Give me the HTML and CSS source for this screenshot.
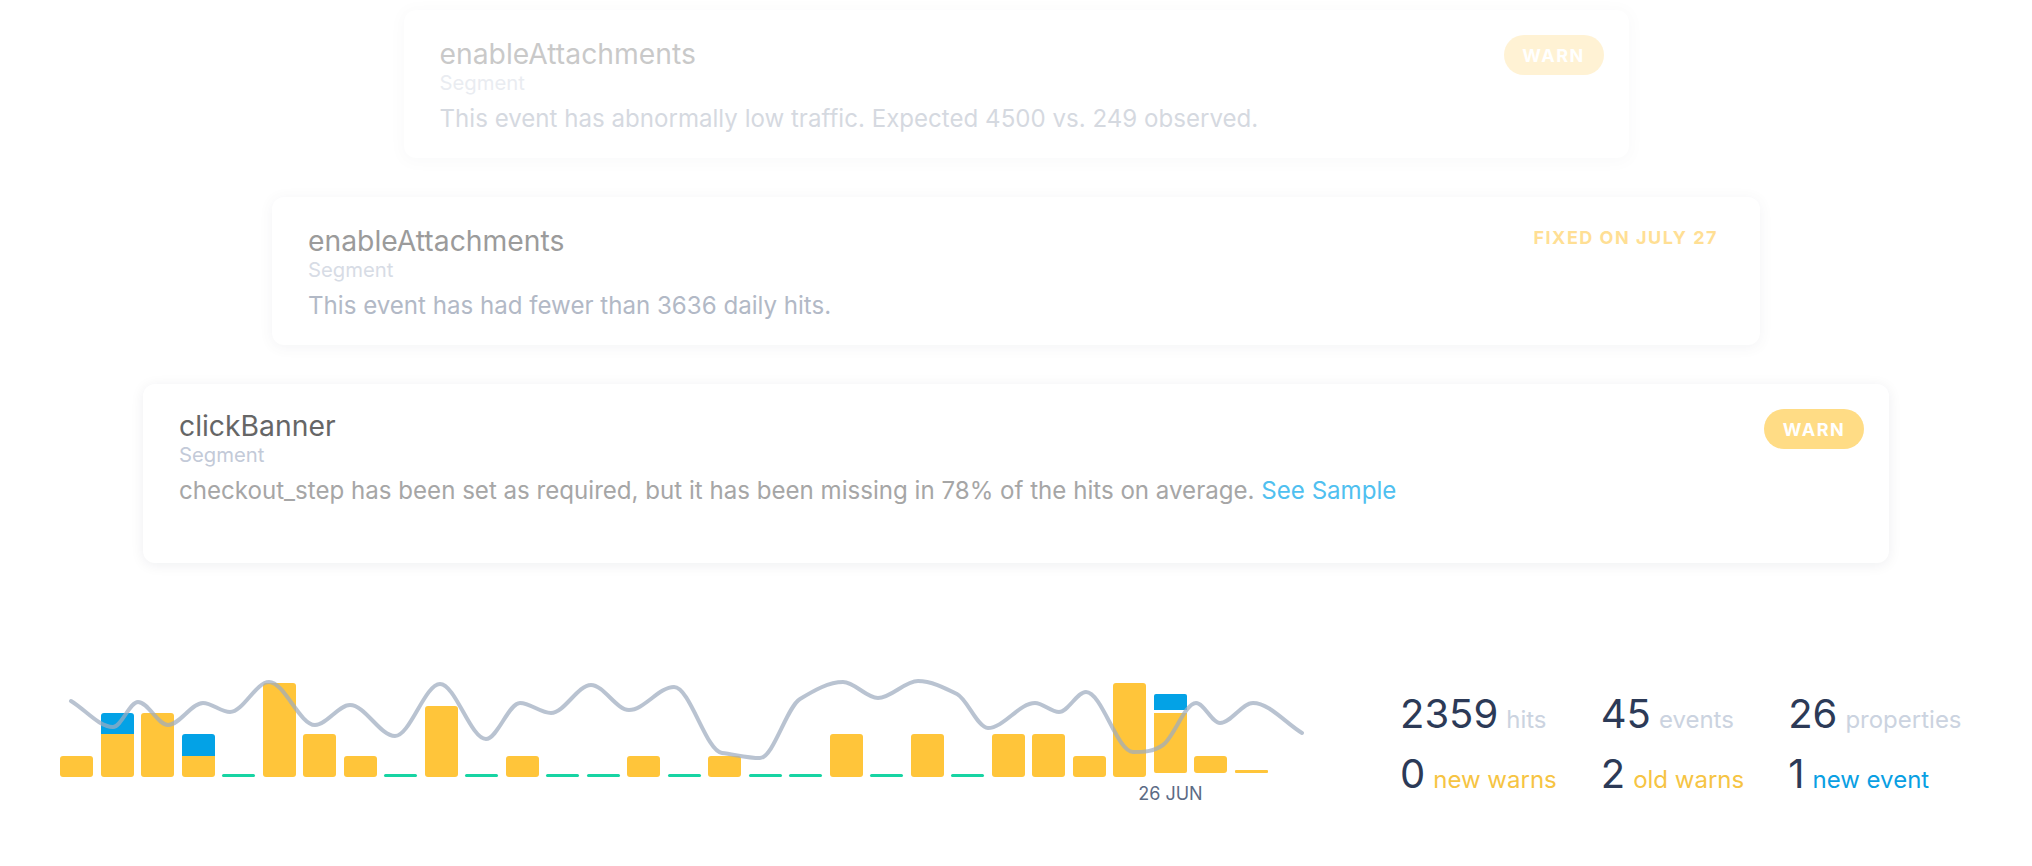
FILE: index.html
```html
<!DOCTYPE html>
<html lang="en">
<head>
<meta charset="utf-8">
<title>Event monitor</title>
<link rel="stylesheet" href="styles.css">
</head>
<body>
<div class="page">
  <section class="alerts">
    <article class="card card--far">
      <div class="card-body card-body--shifted">
        <div class="card-title">enableAttachments</div>
        <div class="card-source">Segment</div>
        <p class="card-text card-text--slate">This event has abnormally low traffic. Expected 4500 vs. 249 observed.</p>
      </div>
      <span class="badge badge--warn">WARN</span>
    </article>
    <article class="card card--mid">
      <div class="card-body card-body--shifted">
        <div class="card-title">enableAttachments</div>
        <div class="card-source">Segment</div>
        <p class="card-text card-text--slate">This event has had fewer than 3636 daily hits.</p>
      </div>
      <span class="badge badge--fixed">FIXED ON JULY 27</span>
    </article>
    <article class="card card--near">
      <div class="card-body">
        <div class="card-title">clickBanner</div>
        <div class="card-source">Segment</div>
        <p class="card-text">checkout_step has been set as required, but it has been missing in 78% of the hits on average. <a class="link">See Sample</a></p>
      </div>
      <span class="badge badge--warn">WARN</span>
    </article>
  </section>

  <section class="summary">
    <div class="chart">
      <div class="bars">
        <div class="col"><div class="plot"><div class="bar" style="height:21px"></div></div></div>
        <div class="col"><div class="plot"><div class="bar bar--stack"><div class="seg seg--new" style="height:21px"></div><div class="seg" style="height:43px"></div></div></div></div>
        <div class="col"><div class="plot"><div class="bar" style="height:64px"></div></div></div>
        <div class="col"><div class="plot"><div class="bar bar--stack"><div class="seg seg--new" style="height:22px"></div><div class="seg" style="height:21px"></div></div></div></div>
        <div class="col"><div class="plot"><div class="dash"></div></div></div>
        <div class="col"><div class="plot"><div class="bar" style="height:94px"></div></div></div>
        <div class="col"><div class="plot"><div class="bar" style="height:43px"></div></div></div>
        <div class="col"><div class="plot"><div class="bar" style="height:21px"></div></div></div>
        <div class="col"><div class="plot"><div class="dash"></div></div></div>
        <div class="col"><div class="plot"><div class="bar" style="height:71px"></div></div></div>
        <div class="col"><div class="plot"><div class="dash"></div></div></div>
        <div class="col"><div class="plot"><div class="bar" style="height:21px"></div></div></div>
        <div class="col"><div class="plot"><div class="dash"></div></div></div>
        <div class="col"><div class="plot"><div class="dash"></div></div></div>
        <div class="col"><div class="plot"><div class="bar" style="height:21px"></div></div></div>
        <div class="col"><div class="plot"><div class="dash"></div></div></div>
        <div class="col"><div class="plot"><div class="bar" style="height:21px"></div></div></div>
        <div class="col"><div class="plot"><div class="dash"></div></div></div>
        <div class="col"><div class="plot"><div class="dash"></div></div></div>
        <div class="col"><div class="plot"><div class="bar" style="height:43px"></div></div></div>
        <div class="col"><div class="plot"><div class="dash"></div></div></div>
        <div class="col"><div class="plot"><div class="bar" style="height:43px"></div></div></div>
        <div class="col"><div class="plot"><div class="dash"></div></div></div>
        <div class="col"><div class="plot"><div class="bar" style="height:43px"></div></div></div>
        <div class="col"><div class="plot"><div class="bar" style="height:43px"></div></div></div>
        <div class="col"><div class="plot"><div class="bar" style="height:21px"></div></div></div>
        <div class="col"><div class="plot"><div class="bar" style="height:94px"></div></div></div>
        <div class="col"><div class="plot plot--today"><div class="bar bar--split"><div class="seg seg--new" style="height:16px"></div><div class="seg" style="height:60px"></div></div></div><div class="axis-label">26 JUN</div></div>
        <div class="col"><div class="plot plot--today"><div class="bar" style="height:17px"></div></div></div>
        <div class="col"><div class="plot plot--today"><div class="bar bar--thin"></div></div></div>
      </div>
      <svg class="trend" width="1260" height="110" viewBox="60 670 1260 110" aria-hidden="true">
        <path d="M71 701 C85 709.4 99 727 113 727 C121.3 727 129.7 702 138 702 C148 702 158 725 168 725 C179.7 725 191.3 703 203 703 C212 703 221 712 230 712 C243 712 256 682 269 682 C284.3 682 299.7 725 315 725 C326.7 725 338.3 705 350 705 C365 705 380 736 395 736 C410 736 425 684 440 684 C455.3 684 470.7 739 486 739 C497.3 739 508.7 703 520 703 C530.3 703 540.7 713 551 713 C564.3 713 577.7 685 591 685 C603.7 685 616.3 710 629 710 C644 710 659 687 674 687 C690 687 706 751.1 722 753 C734.7 754.5 747.3 758 760 758 C773.3 758 786.7 707 800 699 C814.3 690.4 828.7 682 843 682 C854.7 682 866.3 698 878 698 C891.3 698 904.7 681 918 681 C931 681 944 687.5 957 694 C967.3 699.2 977.7 728 988 728 C1003.7 728 1019.3 703 1035 703 C1043 703 1051 712 1059 712 C1068 712 1077 692 1086 692 C1101.7 692 1117.3 752 1133 752 C1143 752 1153 752 1163 745 C1174 737.3 1185 703 1196 703 C1204 703 1212 723 1220 723 C1231 723 1242 703 1253 703 C1269.3 703 1285.7 723.2 1302 733"/>
      </svg>
    </div>

    <div class="stats">
      <div class="stat">2359<span class="stat-label stat-label--muted">hits</span></div>
      <div class="stat">45<span class="stat-label stat-label--muted">events</span></div>
      <div class="stat">26<span class="stat-label stat-label--muted">properties</span></div>
      <div class="stat">0<span class="stat-label stat-label--warn">new warns</span></div>
      <div class="stat">2<span class="stat-label stat-label--warn">old warns</span></div>
      <div class="stat">1<span class="stat-label stat-label--new">new event</span></div>
    </div>
  </section>
</div>
</body>
</html>
```

FILE: styles.css
```css
* { box-sizing: border-box; }

body {
  margin: 0;
  background: #ffffff;
  font-family: "Inter", "Noto Sans", sans-serif;
}

.page {
  padding-top: 10px;
}

/* ---------- alert cards ---------- */
.alerts {
  display: flex;
  flex-direction: column;
  align-items: center;
  gap: 39px;
}

.card {
  display: flex;
  align-items: flex-start;
  background: #ffffff;
  border-radius: 12px;
  box-shadow: 0 2px 14px rgba(20, 30, 50, 0.07);
  padding: 25px 25px 25px 36px;
}

.card--far {
  width: 1225px;
  height: 148px;
  opacity: 0.35;
}

.card--mid {
  width: 1488px;
  height: 148px;
  opacity: 0.65;
}

.card--near {
  width: 1746px;
  height: 179px;
}

.card-body {
  flex: 1;
  padding-top: 1px;
}

.card-body--shifted {
  padding-top: 3px;
}

.card-title {
  font-size: 28.3px;
  line-height: 32px;
  color: #666666;
}

.card-source {
  font-size: 20.3px;
  line-height: 26px;
  color: #c3cad8;
}

.card-text {
  margin: 8px 0 0;
  font-size: 24.1px;
  line-height: 30px;
  color: #a6a6a6;
}

.card-text--slate {
  color: #8a94a8;
}

.link {
  color: #4fc0f0;
  cursor: pointer;
}

.badge {
  flex: none;
  width: 100px;
  height: 40px;
  border-radius: 20px;
  display: flex;
  align-items: center;
  justify-content: center;
  font-weight: 700;
  font-size: 18px;
  letter-spacing: 1.5px;
  color: #ffffff;
}

.badge--warn {
  background: #ffdc85;
}

.badge--fixed {
  width: auto;
  padding: 0 17px;
  margin-top: -5px;
  color: #ffcf5c;
}

/* ---------- summary ---------- */
.summary {
  display: flex;
  align-items: flex-start;
  margin-top: 107px;
  padding-left: 60px;
}

.chart {
  position: relative;
  width: 1208px;
}

.bars {
  display: flex;
  justify-content: space-between;
}

.col {
  width: 33px;
  display: flex;
  flex-direction: column;
}

.plot {
  height: 107px;
  display: flex;
  flex-direction: column;
  justify-content: flex-end;
}

.plot--today {
  padding-bottom: 4px;
}

.bar {
  border-radius: 3px;
  background: #ffc53a;
}

.bar--stack,
.bar--split {
  display: flex;
  flex-direction: column;
  overflow: hidden;
  background: transparent;
}

.bar--split {
  gap: 3px;
  border-radius: 2px;
}

.seg {
  background: #ffc53a;
}

.seg--new {
  background: #03a2e6;
}

.bar--thin {
  height: 3px;
  border-radius: 1px;
}

.dash {
  height: 3px;
  border-radius: 2px;
  background: #17d4a3;
}

.axis-label {
  margin-top: 5px;
  height: 24px;
  display: flex;
  justify-content: center;
  white-space: nowrap;
  font-size: 18px;
  line-height: 24px;
  color: #5c6b85;
}

.trend {
  position: absolute;
  left: 0;
  top: 0;
  overflow: visible;
  pointer-events: none;
}

.trend path {
  fill: none;
  stroke: #9eacbf;
  stroke-opacity: 0.72;
  stroke-width: 4;
  stroke-linecap: round;
  stroke-linejoin: round;
}

/* ---------- stats ---------- */
.stats {
  margin-left: 132px;
  margin-top: 16.5px;
  display: grid;
  grid-template-columns: repeat(3, auto);
  column-gap: 44px;
}

.stat {
  font-size: 40px;
  line-height: 54px;
  color: #2c3a57;
  white-space: nowrap;
}

.stat-label {
  font-size: 24px;
  margin-left: 8px;
}

.stat-label--muted {
  color: #cbd3e0;
}

.stat-label--warn {
  color: #f6c443;
}

.stat-label--new {
  color: #0a9fe3;
}
```
